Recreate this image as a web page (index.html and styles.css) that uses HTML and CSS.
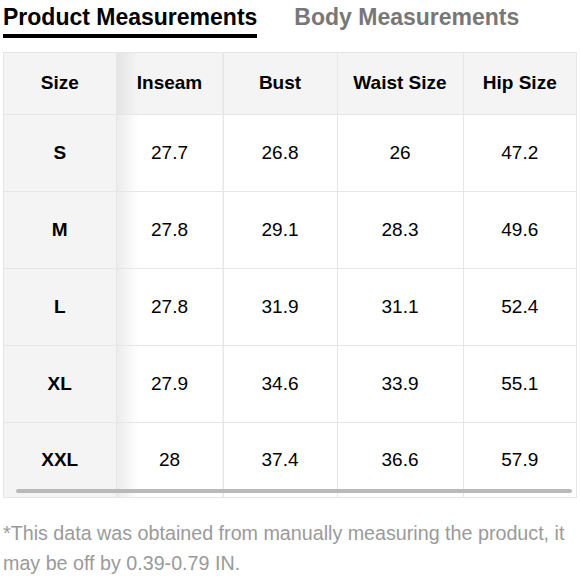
FILE: index.html
```html
<!DOCTYPE html>
<html>
<head>
<meta charset="utf-8">
<link rel="stylesheet" href="styles.css">
</head>
<body>
<div class="page">
  <div class="tabs">
    <div class="tab active">Product Measurements</div>
    <div class="tab">Body Measurements</div>
  </div>
  <div class="table-wrap">
    <table class="sizes">
      <thead>
        <tr><th class="c1">Size</th><th class="c2">Inseam</th><th class="c3">Bust</th><th class="c4">Waist Size</th><th class="c5">Hip Size</th></tr>
      </thead>
      <tbody>
        <tr><th>S</th><td>27.7</td><td>26.8</td><td>26</td><td>47.2</td></tr>
        <tr><th>M</th><td>27.8</td><td>29.1</td><td>28.3</td><td>49.6</td></tr>
        <tr><th>L</th><td>27.8</td><td>31.9</td><td>31.1</td><td>52.4</td></tr>
        <tr><th>XL</th><td>27.9</td><td>34.6</td><td>33.9</td><td>55.1</td></tr>
        <tr class="last"><th>XXL</th><td>28</td><td>37.4</td><td>36.6</td><td>57.9</td></tr>
      </tbody>
    </table>
    <div class="scrollbar"></div>
  </div>
  <p class="note">*This data was obtained from manually measuring the product, it may be off by 0.39-0.79 IN.</p>
</div>
</body>
</html>
```

FILE: styles.css
```css
* { box-sizing: border-box; }
html, body { margin: 0; padding: 0; background: #fff; }
body { font-family: "Liberation Sans", Arial, sans-serif; color: #000; }
.page { width: 580px; padding: 0 3px; }

.tabs { display: flex; gap: 37px; height: 52px; align-items: flex-start; }
.tab {
  font-size: 23px;
  font-weight: bold;
  color: #777;
  line-height: 28px;
  padding-top: 3px;
  height: 38px;
}
.tab.active {
  color: #000;
  border-bottom: 4px solid #000;
  padding-right: 0;
}

.table-wrap {
  position: relative;
  width: 574px;
  border: 1px solid #e6e6e6;
}
.sizes {
  width: 100%;
  border-collapse: collapse;
  table-layout: fixed;
}
.sizes th, .sizes td {
  font-size: 19px;
  text-align: center;
  vertical-align: middle;
  border: 1px solid #e6e6e6;
  padding: 0;
}
.sizes tr > *:first-child { border-left: none; }
.sizes tr > *:last-child { border-right: none; }
.sizes thead th { border-top: none; }
.sizes tr.last > * { border-bottom: none; }

.sizes thead tr { height: 61px; }
.sizes tbody tr { height: 77px; }
.sizes tbody tr.last { height: 75px; }

.sizes th { font-weight: bold; background: #f4f4f4; }
.sizes td { font-weight: normal; background: #fff; }

.sizes .c1 { width: 112px; }
.sizes .c2 { width: 107px; }
.sizes .c3 { width: 114px; }
.sizes .c4 { width: 126px; }

.sizes thead th.c2 { background: linear-gradient(to right, #e4e4e4, #f4f4f4 22px); }
.sizes tbody td:nth-child(2) { background: linear-gradient(to right, #ebebeb, #fff 22px); }

.scrollbar {
  position: absolute;
  left: 12px;
  right: 4px;
  bottom: 4px;
  height: 4px;
  border-radius: 2px;
  background: #b9b9b9;
}

.note {
  margin: 20px 0 0;
  font-size: 19.7px;
  line-height: 30px;
  color: #9a9a9a;
  width: 572px;
}
```
